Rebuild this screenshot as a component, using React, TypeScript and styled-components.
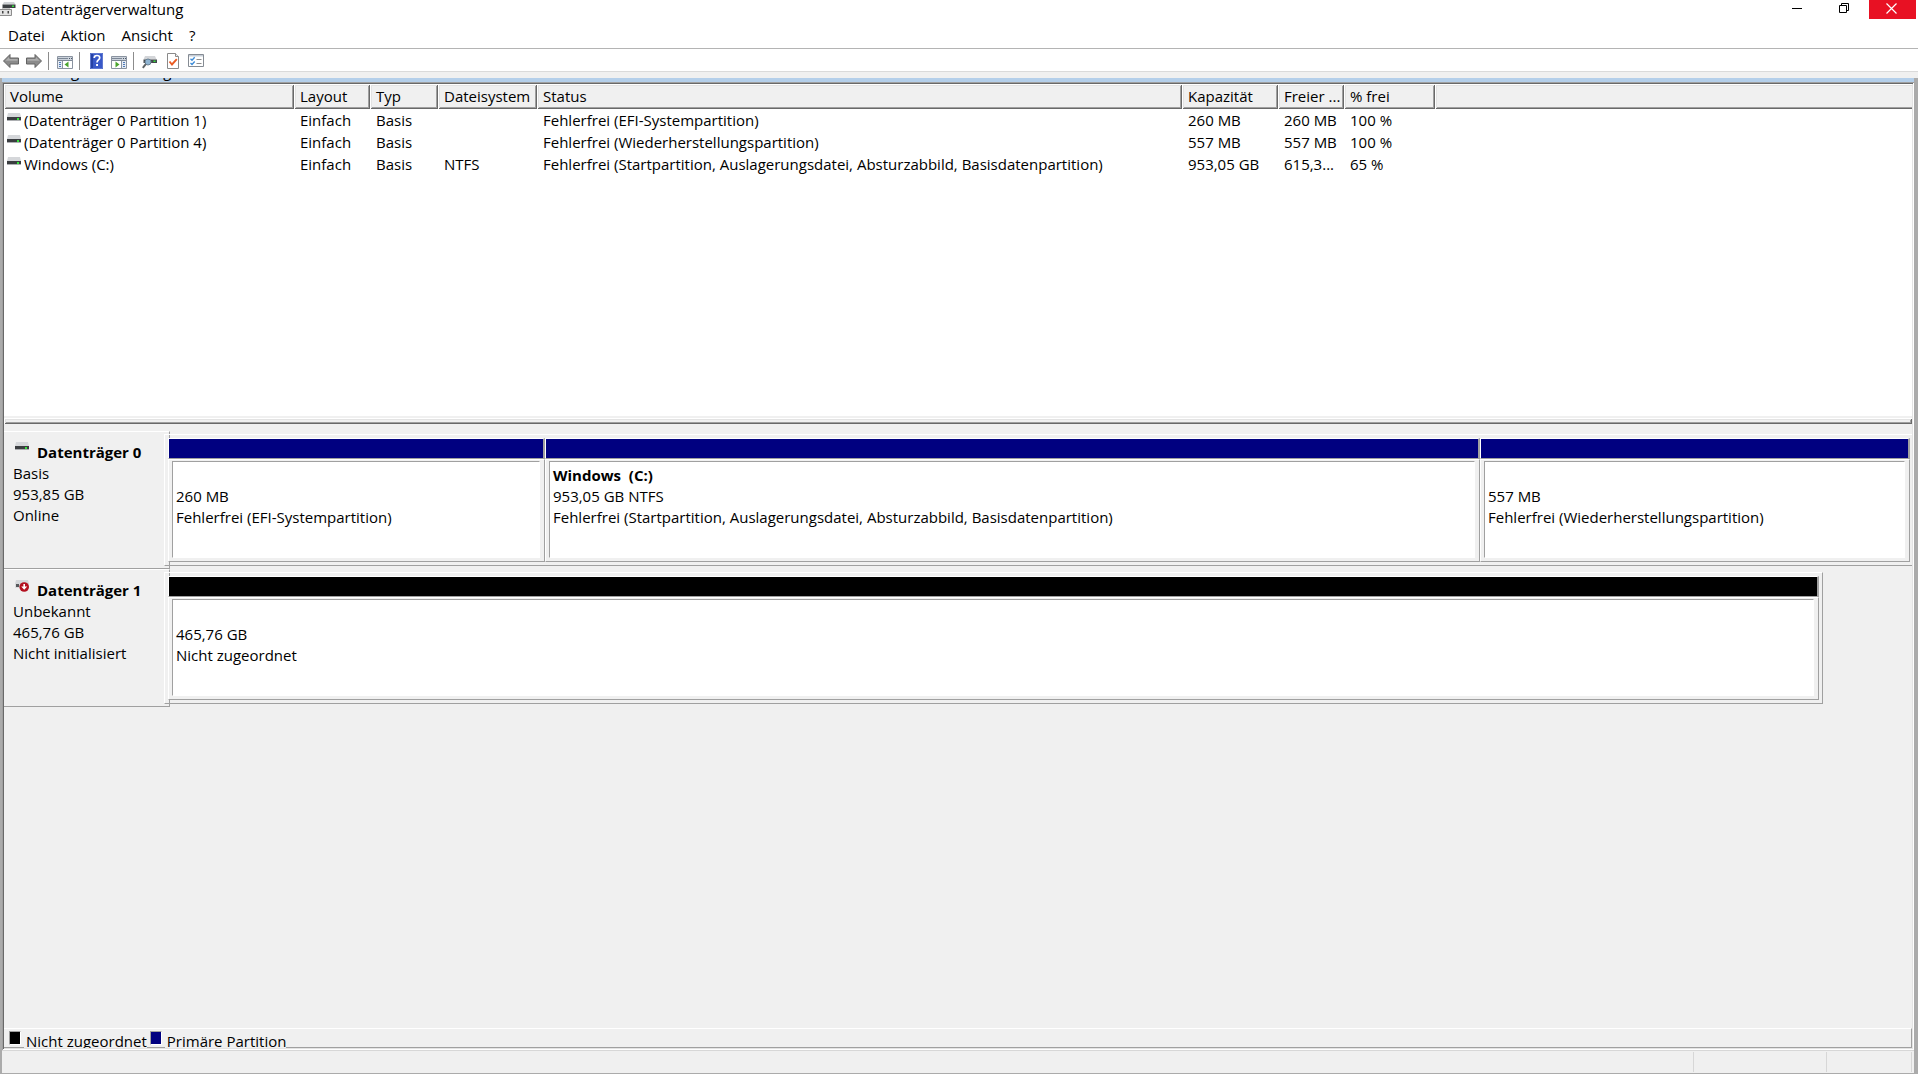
import React from "react";
import styled, { createGlobalStyle } from "styled-components";

const face = "#f0f0f0";
const shadow = "#a0a0a0";
const dark = "#696969";
const soft = "#e3e3e3";

const GlobalStyle = createGlobalStyle`
  *, *::before, *::after { box-sizing: border-box; }
  body {
    margin: 0;
    background: ${face};
    color: #000;
    font: 15px/20px "Open Sans", "Noto Sans", sans-serif;
  }
  button { font: inherit; color: inherit; border: 0; padding: 0; background: none; }
`;

const Window = styled.div`
  display: flex;
  flex-direction: column;
  min-height: 100vh;
  background: ${face};
`;

const TitleBar = styled.header`
  display: flex;
  align-items: flex-start;
  height: 24px;
  background: #fff;
`;

const AppIcon = styled.svg`
  flex: none;
  width: 17px;
  height: 17px;
`;

const Title = styled.h1`
  flex: 1;
  margin: 0;
  padding-left: 4px;
  font-size: 15px;
  line-height: 18px;
  font-weight: 400;
`;

const Controls = styled.div`
  display: flex;
  padding-right: 2px;
`;

const ControlButton = styled.button<{ $close?: boolean }>`
  display: flex;
  justify-content: center;
  width: 47px;
  height: 19px;
  padding: 3px 2px 0 0;
  background: ${(p) => (p.$close ? "#e81123" : "transparent")};
`;

const MenuBar = styled.nav`
  display: flex;
  height: 25px;
  border-bottom: 1px solid #b4b4b4;
  background: #fff;
`;

const MenuButton = styled.button`
  padding: 0 8px;
  height: 22px;
  line-height: 22px;
`;

const Toolbar = styled.div`
  display: flex;
  height: 23px;
  border-bottom: 1px solid #dadada;
  background: #fff;
`;

const ToolButton = styled.button`
  width: 23px;
  height: 22px;
  padding: 4px 3px 1px;
  svg { display: block; width: 17px; height: 17px; }
`;

const ToolDivider = styled.span`
  width: 8px;
  padding: 3px 0 0 2px;
  &::before {
    content: "";
    display: block;
    width: 1px;
    height: 18px;
    background: #8c8c8c;
  }
`;

const Client = styled.main`
  flex: 1;
  display: flex;
  flex-direction: column;
  margin-top: 6px;
  border: solid #ababab;
  border-width: 0 4px 1px 2px;
`;

const Caption = styled.div`
  display: flex;
  align-items: flex-end;
  height: 4px;
  padding: 0 0 2px 7px;
  overflow: hidden;
  background: #b4cfea;
  line-height: 18px;
`;

const Pane = styled.div`
  flex: 1;
  display: flex;
  flex-direction: column;
  padding: 2px;
  box-shadow: inset 1px 1px ${shadow}, inset -1px -1px #fff, inset 2px 2px ${dark},
    inset -2px -2px ${soft};
`;

const ListView = styled.section`
  min-height: 332px;
  background: #fff;
`;

const VolumeTable = styled.table`
  width: 100%;
  table-layout: fixed;
  border-collapse: collapse;
  th, td {
    padding: 0 6px 2px;
    text-align: left;
    font-weight: 400;
    white-space: nowrap;
  }
  th { padding-bottom: 1px; }
  td { height: 22px; }
  tbody::before { content: ""; display: block; height: 1px; }
`;

const Column = styled.col<{ $width?: number }>`
  width: ${(p) => (p.$width ? `${p.$width}px` : "auto")};
`;

const HeadCell = styled.th`
  height: 25px;
  background: ${face};
  box-shadow: inset 1px 1px #fff, inset -1px -1px ${dark}, inset 2px 2px ${soft},
    inset -2px -2px ${shadow};
`;

const HeadFiller = styled.td`
  background: ${face};
  box-shadow: inset 1px 1px #fff, inset 0 -1px ${dark}, inset 2px 2px ${soft},
    inset 0 -2px ${shadow};
`;

const VolumeName = styled.span`
  display: flex;
  align-items: flex-start;
  gap: 3px;
  margin-left: -3px;
  svg { margin-top: 3px; }
`;

const Splitter = styled.div`
  height: 8px;
  padding-top: 2px;
  &::before {
    content: "";
    display: block;
    height: 6px;
    box-shadow: inset 1px 1px #fff, inset -1px -1px ${dark}, inset 2px 2px ${soft},
      inset -2px -2px ${shadow};
  }
`;

const DiskView = styled.section`
  flex: 1;
  padding-top: 7px;
`;

const DiskRow = styled.article`
  display: flex;
  height: 138px;
`;

const DiskLabel = styled.div`
  flex: none;
  width: 166px;
  padding: 10px 4px 0 9px;
  border: solid ${shadow};
  border-width: 1px 1px 1px 0;
  border-top-color: #fff;
  line-height: 21px;
`;

const DiskName = styled.h2`
  display: flex;
  gap: 8px;
  margin: 0;
  padding-left: 2px;
  font-size: 15px;
  line-height: 21px;
  font-weight: 700;
`;

const Track = styled.div`
  flex: 1;
  min-width: 0;
  margin-left: -6px;
  padding: 3px 0;
`;

const Graph = styled.div<{ $share: number; $full: boolean }>`
  display: flex;
  width: ${(p) => p.$share}%;
  height: 132px;
  padding: 3px ${(p) => (p.$full ? 2 : 3)}px 3px 3px;
  border: solid #fff;
  border-width: 1px ${(p) => (p.$full ? 0 : 1)}px 1px 1px;
  border-right-color: ${shadow};
  border-bottom-color: ${shadow};
`;

const Partition = styled.div<{ $weight: number }>`
  flex: ${(p) => p.$weight} 1 0;
  min-width: 0;
  display: flex;
  flex-direction: column;
  background: ${face};
`;

const Stripe = styled.div<{ $color: string }>`
  height: 21px;
  border: solid #fff;
  border-width: 1px 2px 1px 1px;
  border-right-color: ${shadow};
  border-bottom-color: ${shadow};
  background: ${(p) => p.$color};
`;

const Bevel = styled.div`
  flex: 1;
  display: flex;
  padding: 1px 4px 3px 3px;
  border: 1px solid #fff;
  border-right-color: ${shadow};
  border-bottom-color: ${shadow};
`;

const Info = styled.div`
  flex: 1;
  min-width: 0;
  padding: 3px;
  overflow: hidden;
  border: 1px solid #fff;
  border-left-color: ${shadow};
  border-top-color: ${shadow};
  background: #fff;
  line-height: 21px;
  white-space: pre;
`;

const Line = styled.div`
  min-height: 21px;
`;

const Strong = styled(Line)`
  font-weight: 700;
`;

const Legend = styled.footer`
  display: flex;
  height: 20px;
  padding-left: 4px;
  border: solid ${shadow};
  border-width: 1px 1px 1px 0;
  border-top-color: #fff;
`;

const LegendItem = styled.span`
  display: flex;
  gap: 3px;
  margin-right: 2px;
`;

const Swatch = styled.i<{ $color: string }>`
  width: 12px;
  height: 14px;
  margin: 2px 0 0 1px;
  border: 1px solid #fff;
  border-left-color: ${shadow};
  border-top-color: ${shadow};
  background: ${(p) => p.$color};
`;

const LegendText = styled.span`
  height: 19px;
  padding: 2px 0 0 2px;
  overflow: hidden;
  background: ${face};
  line-height: 20px;
`;

const StatusBar = styled.div`
  display: flex;
  justify-content: flex-end;
  height: 23px;
  padding: 1px 2px 1px 0;
  border-top: 1px solid #d7d7d7;
`;

const StatusField = styled.span<{ $width: number }>`
  width: ${(p) => p.$width}px;
  border-right: 1px solid #d7d7d7;
`;

const DriveIcon = ({ offline = false }: { offline?: boolean }) => (
  <svg width="14" height="12" viewBox="0 0 14 12" aria-hidden="true">
    <path d="M1 0h12l1 4H0z" fill="#d5d7da" />
    {offline ? (
      <>
        <path d="M0 4h14v4H0z" fill="#dcdddf" />
        <path d="M1 4h3v3H1z" fill="#55585b" />
        <circle cx="9.200" cy="7" r="4.800" fill="#b3101f" />
        <path d="M8.400 4h1.600v2.400h2.200L9.200 9.800 6.200 6.400h2.200z" fill="#fff" />
      </>
    ) : (
      <>
        <path d="M0 4h14v3.500H0z" fill="#3a3d40" />
        <path d="M0 7.400h14v.6H0z" fill="#b9bbbe" />
        <rect x="10" y="5" width="2" height="2" fill="#35e23c" />
      </>
    )}
  </svg>
);

const Arrow = ({ flip = false }: { flip?: boolean }) => (
  <svg viewBox="0 0 17 17" aria-hidden="true">
    <g transform={flip ? "matrix(-1 0 0 1 16 0)" : undefined}>
      <path d="M.5 8 7 1.500V5h8.500v6H7v3.500z" fill="#8b8b8b" stroke="#636363" />
      <path d="M2.300 7.800 6.100 4v2h8.500v1.800z" fill="#adadad" />
    </g>
  </svg>
);

const PanelIcon = ({ right = false }: { right?: boolean }) => (
  <svg viewBox="0 0 17 17" aria-hidden="true">
    <path d="M.5 3.500h15v12H.5z" fill="#fff" stroke="#8a93a0" />
    <path d="M1 4h14v3H1z" fill="#ccd3dc" />
    <path d="M1 5.500h10M1 7.500h14" stroke="#7c8796" />
    <path d="M12 5.500h1M14 5.500h1" stroke="#4c5868" />
    {right ? (
      <>
        <path d="M11 8h4v7h-4z" fill="#e5ebf3" />
        <path d="M10.500 8v7" stroke="#8a93a0" />
        <path d="M12 9.500h2M12 11.500h2M12 13.500h2" stroke="#4d79b8" />
        <path d="m4.500 8.500 4 3-4 3z" fill="#4aa52e" />
      </>
    ) : (
      <>
        <path d="M1 8h4v7H1z" fill="#e5ebf3" />
        <path d="M5.500 8v7" stroke="#8a93a0" />
        <path d="M2 9.500h2M2 11.500h2M2 13.500h2" stroke="#4d79b8" />
        <path d="m11.500 8.500-4 3 4 3z" fill="#4aa52e" />
      </>
    )}
  </svg>
);

const HelpIcon = () => (
  <svg viewBox="0 0 17 17" aria-hidden="true">
    <path d="M2 0h13v16H2z" fill="#3858c8" />
    <path d="M2 0h3v16H2z" fill="#2541a4" />
    <path d="M2.500.5h12v15h-12z" fill="none" stroke="#5f78d0" />
    <path
      d="M6.200 5c0-3.400 5.500-3.200 5.500-.2 0 2.200-2.700 2.200-2.700 4.700"
      fill="none"
      stroke="#fff"
      strokeWidth="1.700"
    />
    <path d="M8.100 11h1.900v2H8.100z" fill="#fff" />
  </svg>
);

const RescanIcon = () => (
  <svg viewBox="0 0 17 17" aria-hidden="true">
    <path d="M3 3h10l1.500 3.500h-13z" fill="#d3d5d8" />
    <path d="M1.500 6.500H15V10H1.500z" fill="#44484c" />
    <path d="M11.500 7.500h2V9h-2z" fill="#35e23c" />
    <circle cx="6" cy="9" r="3" fill="#8fb4d2" stroke="#6a8193" />
    <path d="m3.800 11.200-3 3.600" stroke="#5d6265" strokeWidth="2" />
  </svg>
);

const CheckIcon = () => (
  <svg viewBox="0 0 17 17" aria-hidden="true">
    <path d="M2.500.5h8l3 3v12h-11z" fill="#fff" stroke="#8a8a8a" />
    <path d="M10.500.5v3h3" fill="#eee" stroke="#8a8a8a" />
    <path d="m4.500 8.500 2.500 3 4.800-5.300" fill="none" stroke="#ea5b22" strokeWidth="1.900" />
  </svg>
);

const ListIcon = () => (
  <svg viewBox="0 0 17 17" aria-hidden="true">
    <path d="M.5 1.500h15v12H.5z" fill="#fff" stroke="#858b93" />
    <path d="M1 2h14v1.500H1z" fill="#c5ccd5" />
    <path d="m2.500 5.800 1.500 1.500 2.700-3M2.500 10 4 11.500l2.700-3" fill="none" stroke="#3b8bd8" strokeWidth="1.300" />
    <path d="M8.500 6.500h5M8.500 10.500h5" stroke="#8d8d8d" />
  </svg>
);

const columns = [
  { name: "Volume", width: 290 },
  { name: "Layout", width: 76 },
  { name: "Typ", width: 68 },
  { name: "Dateisystem", width: 99 },
  { name: "Status", width: 645 },
  { name: "Kapazität", width: 96 },
  { name: "Freier ...", width: 66 },
  { name: "% frei", width: 91 },
];

const volumes = [
  ["(Datenträger 0 Partition 1)", "Einfach", "Basis", "", "Fehlerfrei (EFI-Systempartition)", "260 MB", "260 MB", "100 %"],
  ["(Datenträger 0 Partition 4)", "Einfach", "Basis", "", "Fehlerfrei (Wiederherstellungspartition)", "557 MB", "557 MB", "100 %"],
  ["Windows (C:)", "Einfach", "Basis", "NTFS", "Fehlerfrei (Startpartition, Auslagerungsdatei, Absturzabbild, Basisdatenpartition)", "953,05 GB", "615,3...", "65 %"],
];

const disks = [
  {
    name: "Datenträger 0",
    lines: ["Basis", "953,85 GB", "Online"],
    offline: false,
    share: 100,
    color: "#000080",
    parts: [
      { weight: 377, title: "", lines: ["260 MB", "Fehlerfrei (EFI-Systempartition)"] },
      {
        weight: 935,
        title: "Windows  (C:)",
        lines: ["953,05 GB NTFS", "Fehlerfrei (Startpartition, Auslagerungsdatei, Absturzabbild, Basisdatenpartition)"],
      },
      { weight: 430, title: "", lines: ["557 MB", "Fehlerfrei (Wiederherstellungspartition)"] },
    ],
  },
  {
    name: "Datenträger 1",
    lines: ["Unbekannt", "465,76 GB", "Nicht initialisiert"],
    offline: true,
    share: 94.9,
    color: "#000",
    parts: [{ weight: 1, title: "", lines: ["465,76 GB", "Nicht zugeordnet"] }],
  },
];

export default function App() {
  return (
    <>
      <GlobalStyle />
      <Window>
        <TitleBar>
          <AppIcon viewBox="0 0 17 17" aria-hidden="true">
            <path d="M4 2h10l1.500 2.500H2.500z" fill="#d0d3d6" />
            <path d="M2.500 4.500h13V8h-13z" fill="#3c4043" />
            <path d="M12 5.500h2V7h-2z" fill="#35e23c" />
            <path d="M2 8h8v3H2z" fill="#c9c9c9" />
            <path d="M-.5 9.500h12v6h-12z" fill="#e3e3e3" stroke="#8d8d8d" />
            <path d="M2 11h1.500v2.500H2zM7.500 11H9v2.500H7.500z" fill="#444" />
          </AppIcon>
          <Title>Datenträgerverwaltung</Title>
          <Controls>
            <ControlButton aria-label="Minimieren">
              <svg width="11" height="11" aria-hidden="true">
                <path d="M0 5.500h10" stroke="#000" />
              </svg>
            </ControlButton>
            <ControlButton aria-label="Wiederherstellen">
              <svg width="11" height="11" aria-hidden="true">
                <path d="M.5 2.500h7v7h-7zM2.500 2V.5h7v7H8" fill="none" stroke="#000" />
              </svg>
            </ControlButton>
            <ControlButton $close aria-label="Schließen">
              <svg width="11" height="11" aria-hidden="true">
                <path d="m.5.5 10 10m0-10-10 10" stroke="#fff" strokeWidth="1.200" />
              </svg>
            </ControlButton>
          </Controls>
        </TitleBar>

        <MenuBar>
          {["Datei", "Aktion", "Ansicht", "?"].map((m) => (
            <MenuButton key={m}>{m}</MenuButton>
          ))}
        </MenuBar>

        <Toolbar role="toolbar">
          <ToolButton aria-label="Zurück"><Arrow /></ToolButton>
          <ToolButton aria-label="Vorwärts"><Arrow flip /></ToolButton>
          <ToolDivider />
          <ToolButton aria-label="Konsolenstruktur"><PanelIcon /></ToolButton>
          <ToolDivider />
          <ToolButton aria-label="Hilfe"><HelpIcon /></ToolButton>
          <ToolButton aria-label="Aktionsbereich"><PanelIcon right /></ToolButton>
          <ToolDivider />
          <ToolButton aria-label="Datenträger neu einlesen"><RescanIcon /></ToolButton>
          <ToolButton aria-label="Eigenschaften"><CheckIcon /></ToolButton>
          <ToolButton aria-label="Einstellungen"><ListIcon /></ToolButton>
        </Toolbar>

        <Client>
          <Caption>Datenträgerverwaltung</Caption>
          <Pane>
            <ListView>
              <VolumeTable>
                <colgroup>
                  {columns.map((c) => (
                    <Column key={c.name} $width={c.width} />
                  ))}
                  <Column />
                </colgroup>
                <thead>
                  <tr>
                    {columns.map((c) => (
                      <HeadCell key={c.name} scope="col">{c.name}</HeadCell>
                    ))}
                    <HeadFiller />
                  </tr>
                </thead>
                <tbody>
                  {volumes.map(([name, ...rest]) => (
                    <tr key={name}>
                      <td>
                        <VolumeName>
                          <DriveIcon />
                          {name}
                        </VolumeName>
                      </td>
                      {rest.map((text, i) => (
                        <td key={i}>{text}</td>
                      ))}
                      <td />
                    </tr>
                  ))}
                </tbody>
              </VolumeTable>
            </ListView>

            <Splitter role="separator" />

            <DiskView>
              {disks.map((disk) => (
                <DiskRow key={disk.name}>
                  <DiskLabel>
                    <DiskName>
                      <DriveIcon offline={disk.offline} />
                      {disk.name}
                    </DiskName>
                    {disk.lines.map((l) => (
                      <Line key={l}>{l}</Line>
                    ))}
                  </DiskLabel>
                  <Track>
                    <Graph $share={disk.share} $full={disk.share === 100}>
                      {disk.parts.map((part) => (
                        <Partition key={part.lines[0]} $weight={part.weight}>
                          <Stripe $color={disk.color} />
                          <Bevel>
                            <Info>
                              <Strong>{part.title}</Strong>
                              {part.lines.map((l) => (
                                <Line key={l}>{l}</Line>
                              ))}
                            </Info>
                          </Bevel>
                        </Partition>
                      ))}
                    </Graph>
                  </Track>
                </DiskRow>
              ))}
            </DiskView>

            <Legend>
              <LegendItem>
                <Swatch $color="#000" />
                <LegendText>Nicht zugeordnet</LegendText>
              </LegendItem>
              <LegendItem>
                <Swatch $color="#000080" />
                <LegendText>Primäre Partition</LegendText>
              </LegendItem>
            </Legend>
          </Pane>
          <StatusBar>
            <StatusField $width={133} />
            <StatusField $width={133} />
            <StatusField $width={85} />
          </StatusBar>
        </Client>
      </Window>
    </>
  );
}
